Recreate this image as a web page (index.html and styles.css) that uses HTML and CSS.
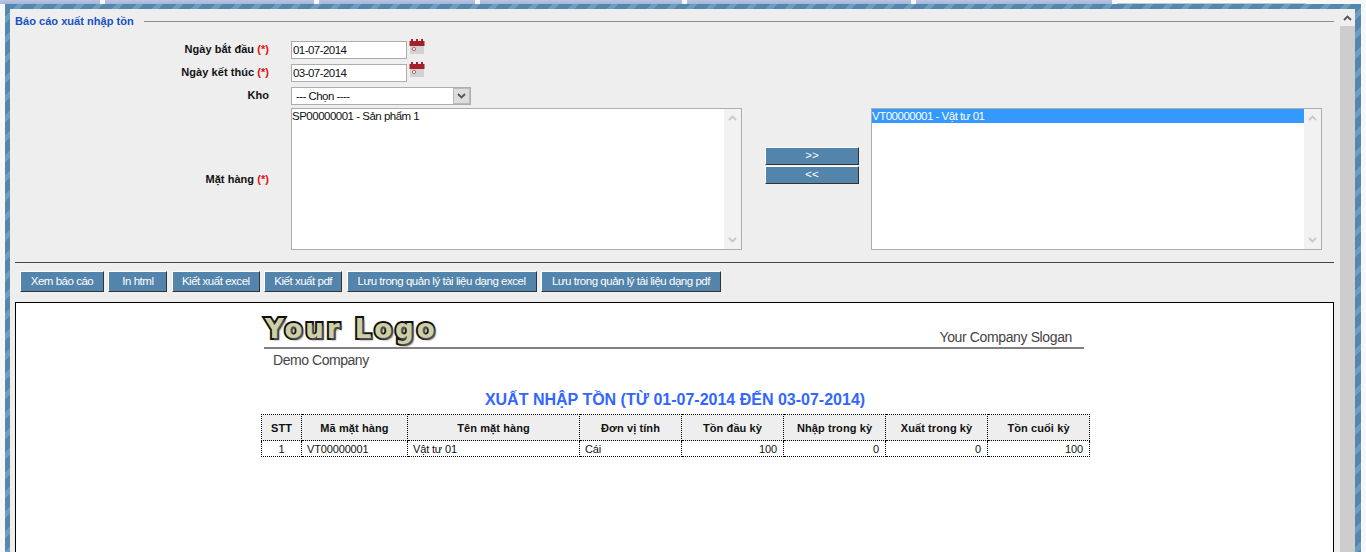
FILE: index.html
```html
<!DOCTYPE html>
<html lang="vi">
<head>
<meta charset="utf-8">
<title>Báo cáo xuất nhập tồn</title>
<link rel="stylesheet" href="styles.css">
</head>
<body>
<svg class="defs" width="0" height="0" aria-hidden="true">
  <symbol id="cal" viewBox="0 0 16 15">
    <rect x="1" y="3" width="14" height="12" fill="#d2d2d2"/>
    <rect x="0.5" y="2" width="15" height="5" fill="#a3212a"/>
    <rect x="2" y="0" width="2" height="3" fill="#a3212a"/>
    <rect x="7" y="0" width="2" height="3" fill="#a3212a"/>
    <rect x="12" y="0" width="2" height="3" fill="#a3212a"/>
    <circle cx="5" cy="10" r="1.7" fill="#eee" stroke="#c66" stroke-width="1"/>
  </symbol>
  <symbol id="up" viewBox="0 0 9 6"><path d="M1 5l3.5-3.5L8 5" fill="none" stroke="currentColor" stroke-width="1.8"/></symbol>
  <symbol id="down" viewBox="0 0 9 6"><path d="M1 1l3.5 3.5L8 1" fill="none" stroke="currentColor" stroke-width="1.8"/></symbol>
</svg>
<nav class="tabs">
  <span class="tab t1"></span><span class="tab t2"></span><span class="tab t3"></span><span class="tab t4"></span><span class="tab t5"></span><span class="tab t6"></span><span class="tab t7 on"></span>
</nav>
<div class="frame">
  <main class="panel">
    <div class="content">
      <div class="legend"><span>Báo cáo xuất nhập tồn</span><i></i></div>
      <form class="form">
        <div class="row r-date">
          <label>Ngày bắt đầu <b>(*)</b></label>
          <input class="date" value="01-07-2014">
          <svg class="cal"><use href="#cal"/></svg>
        </div>
        <div class="row r-date">
          <label>Ngày kết thúc <b>(*)</b></label>
          <input class="date" value="03-07-2014">
          <svg class="cal"><use href="#cal"/></svg>
        </div>
        <div class="row r-kho">
          <label>Kho</label>
          <div class="select"><span>--- Chọn ----</span><em><svg><use href="#down"/></svg></em></div>
        </div>
        <div class="row r-items">
          <label>Mặt hàng <b>(*)</b></label>
          <div class="list l1">
            <div class="opts"><div>SP00000001 - Sản phẩm 1</div></div>
            <div class="lsb"><svg><use href="#up"/></svg><svg><use href="#down"/></svg></div>
          </div>
          <div class="move">
            <button type="button">&gt;&gt;</button>
            <button type="button">&lt;&lt;</button>
          </div>
          <div class="list l2">
            <div class="opts"><div class="sel">VT00000001 - Vật tư 01</div></div>
            <div class="lsb"><svg><use href="#up"/></svg><svg><use href="#down"/></svg></div>
          </div>
        </div>
      </form>
      <hr class="sep">
      <div class="actions">
        <button type="button">Xem báo cáo</button>
        <button type="button">In html</button>
        <button type="button">Kiết xuất excel</button>
        <button type="button">Kiết xuất pdf</button>
        <button type="button">Lưu trong quản lý tài liệu dạng excel</button>
        <button type="button">Lưu trong quản lý tài liệu dạng pdf</button>
      </div>
      <section class="report">
        <div class="sheet">
          <header class="rhead">
            <div class="logo">Your Logo</div>
            <div class="slogan">Your Company Slogan</div>
          </header>
          <div class="company">Demo Company</div>
          <h1>XUẤT NHẬP TỒN (TỪ 01-07-2014 ĐẾN 03-07-2014)</h1>
          <table>
            <colgroup><col class="c1"><col class="c2"><col class="c3"><col class="c5"><col class="c5"><col class="c5"><col class="c5"><col class="c5"></colgroup>
            <thead><tr><th>STT</th><th>Mã mặt hàng</th><th>Tên mặt hàng</th><th>Đơn vị tính</th><th>Tồn đầu kỳ</th><th>Nhập trong kỳ</th><th>Xuất trong kỳ</th><th>Tồn cuối kỳ</th></tr></thead>
            <tbody><tr><td class="ctr">1</td><td>VT00000001</td><td>Vật tư 01</td><td>Cái</td><td class="num">100</td><td class="num">0</td><td class="num">0</td><td class="num">100</td></tr></tbody>
          </table>
        </div>
      </section>
    </div>
    <aside class="vsb"><span class="arrow"><svg><use href="#up"/></svg></span><span class="thumb"></span></aside>
  </main>
</div>
</body>
</html>
```
FILE: styles.css
```css
* { box-sizing: border-box; }
html, body { margin: 0; height: 552px; overflow: hidden; }
body { background: #f7f7f7; font: 11.5px "Liberation Sans", Arial, sans-serif; color: #111; }
.defs { position: absolute; }
.tabs { display: flex; height: 4px; gap: 5px; }
.tab { background: linear-gradient(#b9c5e2, #a6b5da); }
.t1 { width: 100px; } .t2 { width: 209px; } .t3 { width: 156px; } .t4 { width: 202px; } .t5 { width: 224px; } .t6 { width: 196px; } .t7 { width: 189px; }
.tab.on { background: #fafafa; border-bottom: 1px solid #c8c8c8; }
.frame { margin: 0 5px; height: 548px; padding: 5px 6px 0 5px; background: repeating-linear-gradient(135deg, #5487ad 0 9px, #6f9dbf 9px 14px); }
.panel { display: flex; height: 543px; background: #eee; overflow: hidden; }
.content { flex: 1; min-width: 0; padding: 0 6px 0 5px; }
.legend { display: flex; align-items: center; height: 24px; gap: 10px; font-weight: bold; font-size: 11px; color: #1750c4; letter-spacing: .04px; }
.legend i { flex: 1; height: 1px; background: #8d8d8d; }
.form { padding-top: 5px; }
.row { display: flex; align-items: center; }
.row label { width: 274px; text-align: right; padding-right: 20px; font-weight: bold; font-size: 11px; letter-spacing: .05px; }
.row label b { color: #e01010; }
.r-date label, .r-kho label { margin-bottom: 2px; }
.r-date { height: 23px; }
.r-date .date { width: 116px; height: 18px; margin: 1px 0 0 2px; padding: 0 1px; border: 1px solid #adadad; background: #fff; font: 11.5px "Liberation Sans", Arial, sans-serif; letter-spacing: -.55px; color: #111; }
.cal { width: 16px; height: 15px; margin: -7px 0 0 2px; }
.r-kho { height: 20px; margin-top: 2px; }
.select { display: flex; align-items: center; justify-content: space-between; width: 180px; height: 18px; margin-left: 2px; border: 1px solid #adadad; background: #fff; padding-left: 4px; letter-spacing: -.55px; }
.select em { display: flex; align-items: center; justify-content: center; width: 17px; height: 16px; background: #ddd; border: 1px solid #bbb; color: #555; }
.select em svg { width: 9px; height: 6px; }
.r-items { height: 142px; margin-top: 2px; }
.list { display: flex; height: 142px; border: 1px solid #adadad; background: #fff; }
.l1 { width: 451px; margin-left: 2px; }
.l2 { width: 451px; }
.opts { flex: 1; letter-spacing: -.5px; line-height: 14px; }
.opts div { height: 14px; }
.opts .sel { background: #3399ff; color: #fff; }
.lsb { display: flex; flex-direction: column; justify-content: space-between; align-items: center; width: 17px; padding: 6px 0; background: #f2f2f2; color: #c8c8c8; }
.lsb svg { width: 9px; height: 6px; }
.move { display: flex; flex-direction: column; gap: 1px; width: 129px; padding: 0 12px 0 23px; margin-top: -27px; }
.move button, .actions button { border: 1px solid; border-color: #fff #333 #333 #fff; background: #5384ab; color: #fff; font: 11.5px "Liberation Sans", Arial, sans-serif; padding: 0 0 2px; }
.move button { height: 18px; width: 94px; }
.sep { height: 1px; margin: 12px 0 8px; border: 0; background: #444; }
.actions { display: flex; gap: 4.4px; height: 21px; margin-left: 5px; }
.actions button { height: 21px; letter-spacing: -.47px; }
.actions button:nth-child(1) { width: 84px; }
.actions button:nth-child(2) { width: 59px; }
.actions button:nth-child(3) { width: 88px; }
.actions button:nth-child(4) { width: 78px; }
.actions button:nth-child(5) { width: 190px; }
.actions button:nth-child(6) { width: 180px; }
.report { margin-top: 10px; height: 260px; background: #fff; border: 1px solid #000; border-bottom: 0; }
.sheet { width: 828px; margin-left: 245px; }
.rhead { display: flex; align-items: flex-end; justify-content: space-between; height: 46px; width: 820px; margin-left: 3px; border-bottom: 2px solid #808080; padding-right: 12px; }
.logo { font: bold 26px "DejaVu Sans", sans-serif; color: #cfcfa5; letter-spacing: 3px; -webkit-text-stroke: 4px #111; paint-order: stroke fill; text-shadow: 2px 2px 2px #555; line-height: 30px; margin: 0 0 3px 1px; width: 176px; white-space: nowrap; }
.slogan { font-size: 14px; color: #444; line-height: 18px; letter-spacing: -.37px; margin-bottom: 1px; }
.company { font-size: 14px; color: #444; letter-spacing: -.45px; margin: 3px 0 0 12px; line-height: 16px; }
h1 { margin: 22px 0 0; height: 24px; font-size: 16px; line-height: 20px; font-weight: bold; color: #3366ff; text-align: center; }
table { width: 828px; border-collapse: collapse; table-layout: fixed; font-size: 11px; }
th, td { border: 1px dotted #000; padding: 0 5px; color: #111; }
th { background: #eee; height: 26px; font-size: 11px; letter-spacing: .1px; text-align: center; }
td { height: 16px; letter-spacing: -.15px; }
.ctr { text-align: center; }
.num { text-align: right; padding-right: 6px; }
.c1 { width: 40px; } .c2 { width: 106px; } .c3 { width: 172px; } .c5 { width: 102px; }
.vsb { display: flex; flex-direction: column; width: 15px; background: #eee; }
.arrow { display: flex; align-items: center; justify-content: center; height: 17px; color: #555; }
.arrow svg { width: 9px; height: 6px; }
.thumb { flex: 1; background: #cdcdcd; }
```
